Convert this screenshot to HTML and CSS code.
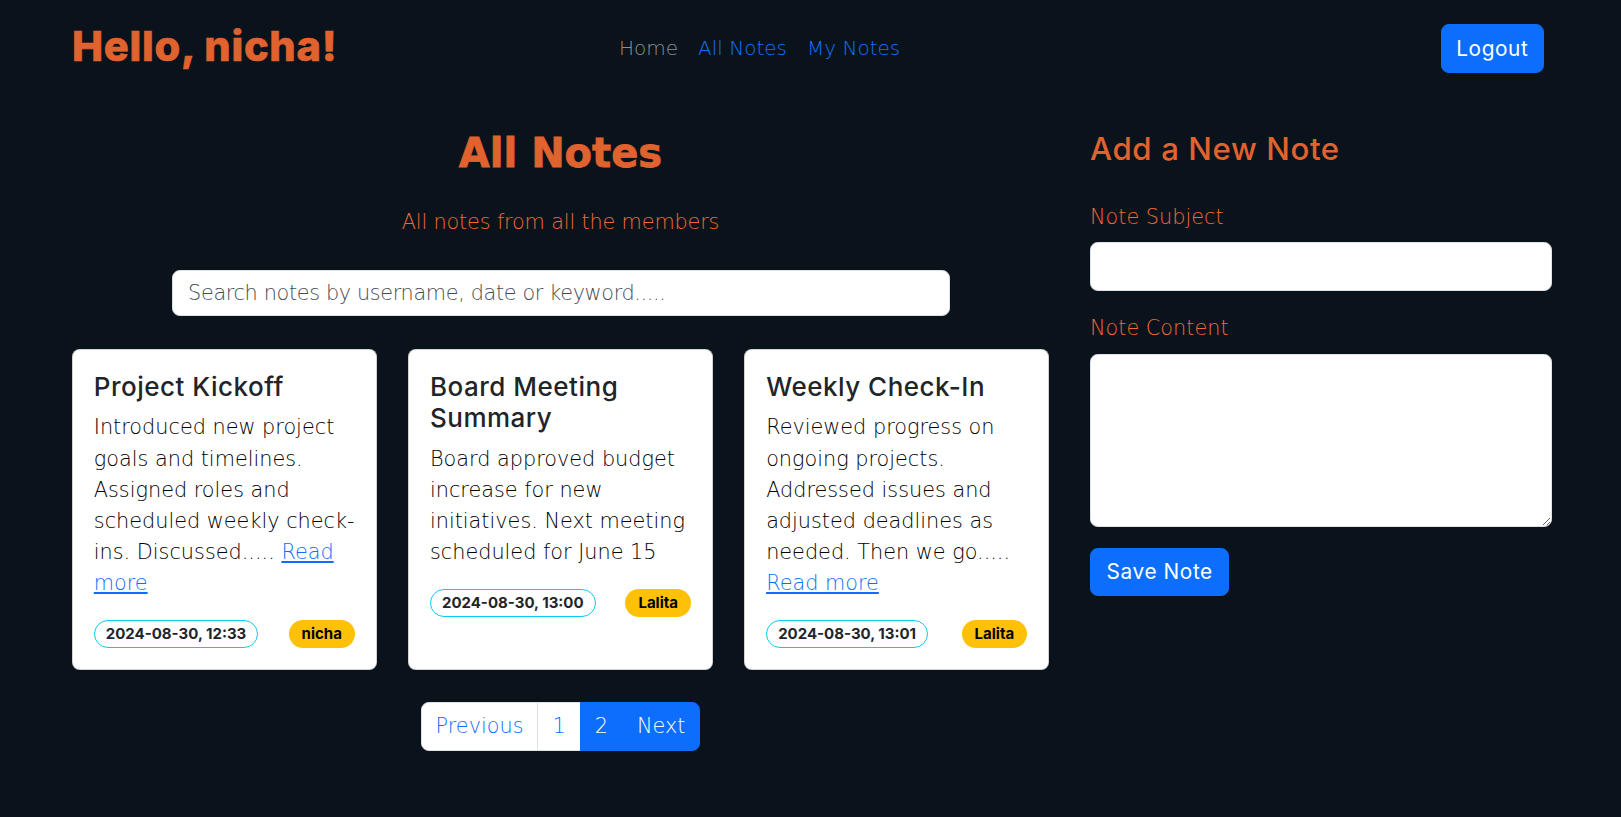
FILE: index.html
```html
<!DOCTYPE html>
<html lang="en">
<head>
<meta charset="utf-8">
<title>All Notes</title>
<link rel="stylesheet" href="styles.css">
</head>
<body>
<header class="topbar">
  <h2 class="brand">Hello, nicha!</h2>
  <nav class="nav">
    <a class="nav-link muted" href="#">Home</a>
    <a class="nav-link" href="#">All Notes</a>
    <a class="nav-link" href="#">My Notes</a>
  </nav>
  <button class="btn btn-primary logout" type="button">Logout</button>
</header>

<main class="main">
  <section class="notes">
    <h1 class="page-title">All Notes</h1>
    <p class="subtitle">All notes from all the members</p>
    <input class="search" type="text" placeholder="Search notes by username, date or keyword.....">

    <div class="cards">
      <article class="card">
        <h5 class="card-title">Project Kickoff</h5>
        <p class="card-text">Introduced new project goals and timelines. Assigned roles and scheduled weekly check-ins. Discussed..... <a href="#">Read more</a></p>
        <div class="card-meta">
          <span class="badge badge-date">2024-08-30, 12:33</span>
          <span class="badge badge-user">nicha</span>
        </div>
      </article>
      <article class="card">
        <h5 class="card-title">Board Meeting Summary</h5>
        <p class="card-text">Board approved budget increase for new initiatives. Next meeting scheduled for June 15</p>
        <div class="card-meta">
          <span class="badge badge-date">2024-08-30, 13:00</span>
          <span class="badge badge-user">Lalita</span>
        </div>
      </article>
      <article class="card">
        <h5 class="card-title">Weekly Check-In</h5>
        <p class="card-text">Reviewed progress on ongoing projects. Addressed issues and adjusted deadlines as needed. Then we go..... <a href="#">Read more</a></p>
        <div class="card-meta">
          <span class="badge badge-date">2024-08-30, 13:01</span>
          <span class="badge badge-user">Lalita</span>
        </div>
      </article>
    </div>

    <ul class="pagination">
      <li><a class="page-link first" href="#">Previous</a></li>
      <li><a class="page-link" href="#">1</a></li>
      <li><a class="page-link active" href="#">2</a></li>
      <li><a class="page-link active last" href="#">Next</a></li>
    </ul>
  </section>

  <aside class="add-note">
    <h3 class="form-title">Add a New Note</h3>
    <form class="note-form">
      <label class="form-label" for="subject">Note Subject</label>
      <input class="form-control" id="subject" type="text">
      <label class="form-label" for="content">Note Content</label>
      <textarea class="form-control form-textarea" id="content"></textarea>
      <button class="btn btn-primary save" type="button">Save Note</button>
    </form>
  </aside>
</main>
</body>
</html>
```
FILE: styles.css
```css
* { box-sizing: border-box; }

body {
  margin: 0;
  background: #0a131c;
  font-family: "DejaVu Sans", "Inter", sans-serif;
  font-weight: 300;
  font-size: 20.8px;
  line-height: 31.2px;
  color: #111418;
}

a { text-decoration: none; }

/* ---------- header ---------- */
.topbar {
  display: grid;
  grid-template-columns: 537px 1fr auto;
  align-items: center;
  padding: 24px 77px 0 72px;
}

.brand {
  margin: 0 0 4px;
  font-family: "Inter", sans-serif;
  font-weight: 800;
  font-size: 41.6px;
  line-height: 44px;
  letter-spacing: 0.7px;
  -webkit-text-stroke: 0.6px #e0622f;
  color: #e0622f;
}

.nav { display: flex; }

.nav-link {
  padding: 0 10px;
  font-size: 20px;
  color: #1570ff;
}
.nav-link.muted { color: #8a8f95; }

.btn {
  font-family: "Inter", sans-serif;
  font-size: 20.8px;
  font-weight: 400;
  line-height: 31.2px;
  letter-spacing: 0.6px;
  padding: 7.8px 15.6px;
  border-radius: 7.8px;
  border: 1px solid transparent;
  cursor: pointer;
}
.btn-primary {
  background: #0d6efd;
  border-color: #0d6efd;
  color: #fff;
}
.logout { padding: 7.8px 14.6px; }

/* ---------- main ---------- */
.main {
  display: flex;
  align-items: flex-start;
  gap: 41px;
  padding: 56px 69px 0 72px;
}

.notes {
  width: 977px;
  flex: none;
  display: flex;
  flex-direction: column;
  align-items: center;
}

.page-title {
  margin: 0;
  font-family: "DejaVu Sans", sans-serif;
  font-weight: 700;
  font-size: 40px;
  line-height: 48px;
  -webkit-text-stroke: 0.8px #e0622f;
  color: #e0622f;
}

.subtitle {
  margin: 30px 0 0;
  letter-spacing: -0.15px;
  color: #f06a34;
}

.search {
  margin-top: 32px;
  width: 778px;
  height: 46px;
  padding: 0 15.6px;
  border: 1px solid #dee2e6;
  border-radius: 7.8px;
  background: #fff;
  font-family: inherit;
  font-size: 20.8px;
  font-weight: 300;
  letter-spacing: -0.35px;
  color: #212529;
}
.search::placeholder { color: #464c52; }

/* ---------- cards ---------- */
.cards {
  margin-top: 33px;
  width: 100%;
  display: grid;
  grid-template-columns: repeat(3, 1fr);
  gap: 31.5px;
}

.card {
  background: #fff;
  border: 1px solid rgba(0, 0, 0, 0.175);
  border-radius: 7.8px;
  padding: 20.8px;
}

.card-title {
  margin: 0 0 10.4px;
  font-family: "Inter", sans-serif;
  font-size: 26px;
  font-weight: 500;
  line-height: 31.2px;
  letter-spacing: 0.5px;
  color: #212529;
}

.card-text {
  margin: 0 0 20.8px;
  color: #000;
}
.card-text a {
  color: #0d6efd;
  text-decoration: underline;
}

.card-meta {
  display: flex;
  justify-content: space-between;
  align-items: center;
}

.badge {
  display: inline-block;
  font-family: "Inter", sans-serif;
  font-size: 15px;
  font-weight: 700;
  line-height: 15.6px;
  padding: 5px 11px;
  border-radius: 50rem;
  border: 1px solid transparent;
}
.badge-date {
  border-color: #0dcaf0;
  color: #212529;
}
.badge-user {
  background: #ffc107;
  color: #000;
  padding: 5px 12px;
}

/* ---------- pagination ---------- */
.pagination {
  margin: 32px 0 0;
  padding: 0;
  list-style: none;
  display: flex;
}

.page-link {
  display: block;
  padding: 7.8px 14px;
  background: #fff;
  color: #0d6efd;
  border: 1px solid #dee2e6;
  margin-left: -1px;
}
.page-link.first {
  margin-left: 0;
  border-radius: 7.8px 0 0 7.8px;
}
.page-link.last { border-radius: 0 7.8px 7.8px 0; }
.page-link.active {
  background: #0d6efd;
  border-color: #0d6efd;
  color: #fff;
}

/* ---------- add note ---------- */
.add-note {
  width: 462px;
  flex: none;
  padding-top: 2px;
}

.form-title {
  margin: 0 0 33.4px;
  font-family: "Inter", sans-serif;
  font-size: 31.2px;
  font-weight: 500;
  line-height: 37.4px;
  letter-spacing: 0.6px;
  color: #e0622f;
}

.form-label {
  display: block;
  margin-bottom: 9.5px;
  color: #f06a34;
}

.form-control {
  display: block;
  width: 100%;
  height: 49px;
  margin: 0 0 21.5px;
  padding: 7.8px 15.6px;
  border: 1px solid #dee2e6;
  border-radius: 7.8px;
  background: #fff;
  font-family: inherit;
  font-size: 20.8px;
  font-weight: 300;
  color: #212529;
}
.form-textarea {
  height: 173px;
  margin-bottom: 21px;
  resize: vertical;
}

.save { display: block; }
```
